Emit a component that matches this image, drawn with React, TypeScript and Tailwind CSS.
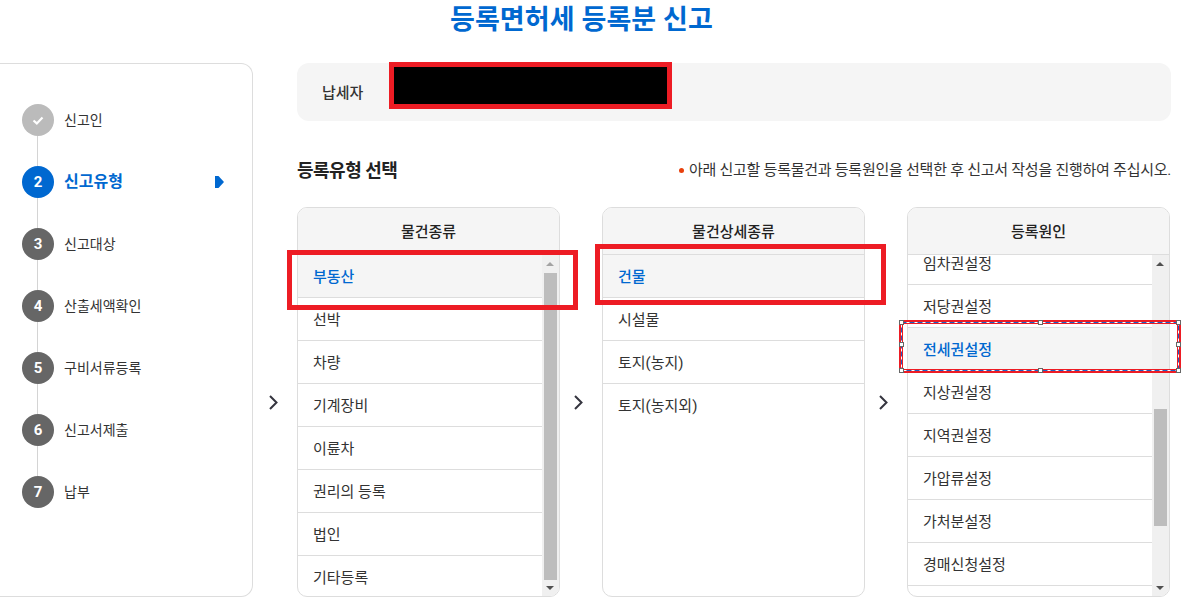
const FONT = "font-['Roboto','Noto_Sans_CJK_KR',sans-serif]"

const steps = [
  { no: "1", label: "신고인", state: "done" },
  { no: "2", label: "신고유형", state: "active" },
  { no: "3", label: "신고대상", state: "todo" },
  { no: "4", label: "산출세액확인", state: "todo" },
  { no: "5", label: "구비서류등록", state: "todo" },
  { no: "6", label: "신고서제출", state: "todo" },
  { no: "7", label: "납부", state: "todo" },
]

const kinds = ["부동산", "선박", "차량", "기계장비", "이륜차", "권리의 등록", "법인", "기타등록"]
const details = ["건물", "시설물", "토지(농지)", "토지(농지외)"]
const causes = ["임차권설정", "저당권설정", "전세권설정", "지상권설정", "지역권설정", "가압류설정", "가처분설정", "경매신청설정"]

function StepItem({ no, label, state, last }: { no: string; label: string; state: string; last: boolean }) {
  const circle = state === "done" ? "bg-[#bbbbbb]" : state === "active" ? "bg-[#0068d0]" : "bg-[#666666]"
  return (
    <li className="relative flex h-[62px] items-start">
      {!last && <span className="absolute left-[15px] top-[32px] h-[30px] w-px bg-[#d4d4d4]" />}
      <span className={`flex h-8 w-8 shrink-0 items-center justify-center rounded-full text-[15px] font-bold text-white ${circle}`}>
        {state === "done" ? (
          <svg width="14" height="11" viewBox="0 0 14 11" fill="none">
            <path d="M2.5 5.500 5.800 8.400 11.500 2.600" stroke="white" strokeWidth="2.200" />
          </svg>
        ) : (
          no
        )}
      </span>
      <span className={`ml-2.5 leading-8 ${state === "active" ? "text-base font-bold text-[#0068d0]" : "text-sm text-[#333333]"}`}>
        {label}
      </span>
      {state === "active" && (
        <svg className="absolute left-[193px] top-[10px]" width="9" height="12" viewBox="0 0 9 12">
          <path d="M0 0h3.500L9 6l-5.500 6H0z" fill="#0068d0" />
        </svg>
      )}
    </li>
  )
}

function Scrollbar({ top, height, upDark }: { top: number; height: number; upDark: boolean }) {
  return (
    <div className="relative w-[17px] shrink-0 bg-[#f0f0f0]">
      <svg className="absolute left-[4px] top-[7px]" width="8" height="4" viewBox="0 0 8 4">
        <path d="M4 0 8 4H0z" fill={upDark ? "#505050" : "#a3a3a3"} />
      </svg>
      <div className="absolute left-[2px] w-[13px] bg-[#bdbdbd]" style={{ top, height }} />
      <svg className="absolute bottom-[6px] left-[4px]" width="8" height="4" viewBox="0 0 8 4">
        <path d="M0 0H8L4 4z" fill="#505050" />
      </svg>
    </div>
  )
}

function ListColumn({
  title,
  rows,
  selected,
  offset = 0,
  bar,
}: {
  title: string
  rows: string[]
  selected: string
  offset?: number
  bar?: { top: number; height: number; upDark: boolean }
}) {
  return (
    <div className="relative">
      {/* arrow sits in the gap left of each column */}
      <svg className="absolute -left-[28px] top-[188px]" width="9" height="15" viewBox="0 0 9 15" fill="none">
        <path d="M1 1 7.500 7.500 1 14" stroke="#35353f" strokeWidth="2" />
      </svg>
      <div className="flex h-[390px] w-[263px] flex-col overflow-hidden rounded-[10px] border border-[#dddddd]">
        <div className="flex h-[47px] shrink-0 items-center justify-center border-b border-[#dddddd] bg-[#f5f5f5] pt-[2px] text-[15px] font-medium text-[#222222]">
          {title}
        </div>
        <div className="flex min-h-0 flex-1">
          <ul className="min-w-0 flex-1 overflow-hidden">
            {rows.map((row, i) => (
              <li
                key={row}
                style={i === 0 && offset ? { marginTop: -offset } : undefined}
                className={`flex h-[43px] items-center pl-[15px] pt-[2px] text-[15px] ${
                  i < rows.length - 1 || offset ? "border-b border-[#dddddd]" : ""
                } ${row === selected ? "bg-[#f5f5f5] font-medium text-[#0068d0]" : "text-[#333333]"}`}
              >
                {row}
              </li>
            ))}
          </ul>
          {bar && <Scrollbar {...bar} />}
        </div>
      </div>
    </div>
  )
}

export default function App() {
  return (
    <div className={`relative h-[604px] w-[1184px] overflow-hidden bg-white ${FONT}`}>
      <h1 className="flex h-[63px] justify-center pr-[21px] text-[27px] font-bold leading-[40px] tracking-[0.1px] text-[#0068d0]">
        등록면허세 등록분 신고
      </h1>

      <div className="flex">
        {/* Steps */}
        <aside className="h-[534px] w-[253px] shrink-0 rounded-r-[12px] border border-l-0 border-[#dddddd] pl-[22px] pt-[40px]">
          <ol>
            {steps.map((s, i) => (
              <StepItem key={s.no} {...s} last={i === steps.length - 1} />
            ))}
          </ol>
        </aside>

        {/* Main */}
        <main className="ml-[44px] w-[874px]">
          <div className="flex h-[58px] items-center rounded-[12px] bg-[#f5f5f5] pl-[25px] pt-[2px] text-[15px] font-medium text-[#333333]">
            납세자
          </div>

          <div className="mt-[36px] flex h-[26px] items-center justify-between">
            <h2 className="text-[18px] font-bold tracking-[-0.5px] text-[#222222]">등록유형 선택</h2>
            <p className="flex items-center text-[15px] tracking-[-0.25px] text-[#333333]">
              <span className="mr-[5px] h-[5px] w-[5px] rounded-full bg-[#e8400c]" />
              아래 신고할 등록물건과 등록원인을 선택한 후 신고서 작성을 진행하여 주십시오.
            </p>
          </div>

          <div className="mt-[24px] flex gap-[42px]">
            <ListColumn title="물건종류" rows={kinds} selected="부동산" bar={{ top: 18, height: 307, upDark: false }} />
            <ListColumn title="물건상세종류" rows={details} selected="건물" />
            <ListColumn
              title="등록원인"
              rows={causes}
              selected="전세권설정"
              offset={13}
              bar={{ top: 154, height: 117, upDark: true }}
            />
          </div>
        </main>
      </div>

      {/* Annotations drawn over the capture */}
      <div className="absolute left-[389px] top-[62px] h-[47px] w-[283px] border-[5px] border-[#ed1c24] bg-black" />
      <div className="absolute left-[287px] top-[250px] h-[60px] w-[291px] border-[5px] border-[#ed1c24]" />
      <div className="absolute left-[595px] top-[244px] h-[61px] w-[291px] border-[5px] border-[#ed1c24]" />
      <div className="absolute left-[899px] top-[320px] h-[53px] w-[282px] border-4 border-[#ed1c24]">
        <svg className="absolute -left-[4px] -top-[4px]" width="282" height="53" fill="none">
          <rect x="2.500" y="2.500" width="277" height="48" stroke="white" />
          <rect x="2.500" y="2.500" width="277" height="48" stroke="#1f5fc0" strokeDasharray="5 3" />
        </svg>
        {[
          "-left-[4px] -top-[4px]",
          "left-[135px] -top-[4px]",
          "-right-[4px] -top-[4px]",
          "-left-[4px] top-[18px]",
          "-right-[4px] top-[18px]",
          "-left-[4px] -bottom-[4px]",
          "left-[135px] -bottom-[4px]",
          "-right-[4px] -bottom-[4px]",
        ].map((pos) => (
          <span key={pos} className={`absolute h-[5px] w-[5px] border border-[#666666] bg-white ${pos}`} />
        ))}
      </div>
    </div>
  )
}
